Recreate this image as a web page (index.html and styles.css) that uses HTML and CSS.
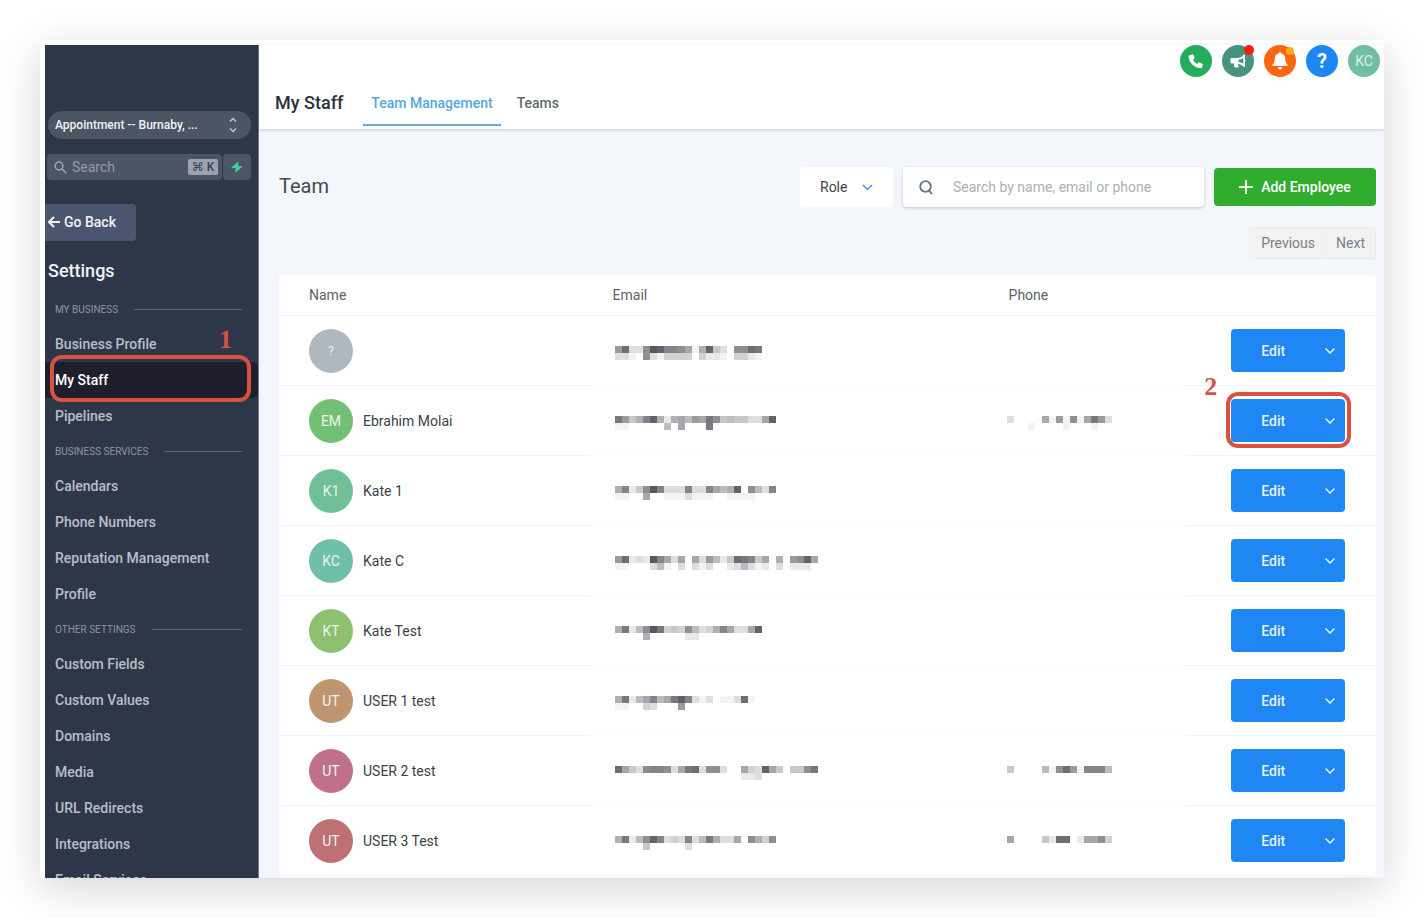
FILE: index.html
```html
<!DOCTYPE html>
<html lang="en">
<head>
<meta charset="utf-8">
<title>My Staff</title>
<link rel="stylesheet" href="styles.css">
</head>
<body>
<div class="frame">
  <aside class="sidebar">
    <button class="location" type="button">
      <span>Appointment -- Burnaby, ...</span>
      <svg width="8" height="16" viewBox="0 0 8 16"><path d="M1 4.5 4 1.5l3 3M1 11.500l3 3 3-3"/></svg>
    </button>
    <div class="quick">
      <label class="quick-search">
        <svg width="13" height="13" viewBox="0 0 13 13"><circle cx="5" cy="5" r="3.900"/><path d="m8 8 4.300 4.300"/></svg>
        <input type="text" placeholder="Search" aria-label="Search">
        <kbd>⌘ K</kbd>
      </label>
      <button class="bolt" type="button" aria-label="Quick actions">
        <svg width="12" height="12" viewBox="0 0 12 12"><path d="M7.300.2.600 6.200q-.4.800.5.900h3.500L4 11.800l7.300-6q.4-.8-.5-.9H7.400z"/></svg>
      </button>
    </div>
    <button class="back" type="button">
      <svg width="12" height="12" viewBox="0 0 12 12"><path d="M6 1 1 6l5 5M1.200 6H12"/></svg>
      Go Back
    </button>
    <h2>Settings</h2>
    <nav>
      <h3>MY BUSINESS</h3>
      <a href="#">Business Profile</a>
      <a href="#" class="active">My Staff<span class="ring ring-nav"></span><b class="step step-nav">1</b></a>
      <a href="#">Pipelines</a>
      <h3>BUSINESS SERVICES</h3>
      <a href="#">Calendars</a>
      <a href="#">Phone Numbers</a>
      <a href="#">Reputation Management</a>
      <a href="#">Profile</a>
      <h3>OTHER SETTINGS</h3>
      <a href="#">Custom Fields</a>
      <a href="#">Custom Values</a>
      <a href="#">Domains</a>
      <a href="#">Media</a>
      <a href="#">URL Redirects</a>
      <a href="#">Integrations</a>
      <a href="#">Email Services</a>
    </nav>
  </aside>
  <div class="content">
    <header class="topbar">
      <div class="actions">
        <button class="round phone" type="button" aria-label="Phone"><svg width="16" height="16" viewBox="0 0 16 16"><path d="M1.200 2.600 4.300 1.200q.6-.2.900.4l1.300 3q.2.500-.2.900L4.900 6.700q1.400 2.900 4.300 4.300l1.200-1.400q.4-.4.900-.2l3.100 1.300q.6.300.4.900l-.800 3q-.2.600-.8.600Q8 15.200 4.400 11.600T.7 3.400q0-.6.500-.8z"/></svg></button>
        <button class="round news" type="button" aria-label="Announcements"><svg width="17" height="16" viewBox="0 0 17 16"><path fill-rule="evenodd" d="M1.500 5H7q4 0 6.500-3.200Q15 1 15 2.500v4q1.500 1 0 2.500v4q0 1.500-1.500.800Q11.500 11 8 10.700q-.3 1.500.8 2.500 0 1.300-1.300 1.300H4.700Q3.600 12.800 4 10.500H1.500Q.5 10.500.5 9.500V6q0-1 1-1zM8.500 6.700v2.200q2.700.2 4.700 1.800V4.900q-2 1.600-4.700 1.800z"/></svg><i></i></button>
        <button class="round bell" type="button" aria-label="Notifications"><svg width="18" height="20" viewBox="0 0 18 20"><path d="M9 1q1 0 1 1.200 4 .9 4.200 5.300.1 4.500 2.300 6.100.6 1.200-.5 1.400H2q-1.100-.2-.5-1.400 2.200-1.600 2.300-6.100Q4 3.100 8 2.200 8 1 9 1zM6.700 16.300h4.600Q11 18.500 9 18.500t-2.300-2.200z"/></svg><i></i></button>
        <button class="round help" type="button" aria-label="Help">?</button>
        <button class="round me" type="button">KC</button>
      </div>
      <div class="tabs">
        <h1>My Staff</h1>
        <a href="#" class="current">Team Management</a>
        <a href="#">Teams</a>
      </div>
    </header>
    <main>
      <div class="tools">
        <h2>Team</h2>
        <div class="role">
          <select aria-label="Role"><option>Role</option></select>
          <svg width="11" height="7" viewBox="0 0 11 7"><path d="m1 1 4.500 4.500L10 1"/></svg>
        </div>
        <label class="search">
          <svg width="14" height="15" viewBox="0 0 14 15"><circle cx="6.500" cy="6.500" r="5.300"/><path d="m10 10.500 3 3.500"/></svg>
          <input type="text" placeholder="Search by name, email or phone" aria-label="Search by name, email or phone">
        </label>
        <button class="add" type="button"><svg width="14" height="14" viewBox="0 0 14 14"><path d="M7 0v14M0 7h14"/></svg>Add Employee</button>
      </div>
      <div class="pager"><button type="button">Previous</button><button type="button">Next</button></div>
      <table>
        <thead><tr><th class="c-name">Name</th><th class="c-email">Email</th><th class="c-phone">Phone</th><th class="c-edit"></th></tr></thead>
        <tbody id="staff"></tbody>
      </table>
    </main>
  </div>
</div>
<script src="staff.js"></script>
</body>
</html>
```
FILE: styles.css
```css
* { box-sizing: border-box; }
body {
  margin: 0;
  padding: 40px;
  background: #fff;
  font-family: Roboto, "Liberation Sans", sans-serif;
  font-size: 14px;
  color: #3c4248;
}
h1, h2, h3 { margin: 0; font-weight: 500; }
button, input, select { font: inherit; color: inherit; border: 0; margin: 0; padding: 0; background: none; outline: 0; }
a { color: inherit; text-decoration: none; }
svg { flex: none; fill: none; stroke: currentColor; }
.frame {
  display: flex;
  height: calc(100vh - 80px);
  overflow: hidden;
  padding: 5px 0 0 5px;
  background: #fff;
  box-shadow: 0 10px 40px rgba(0, 0, 0, .17);
}

/* Sidebar */
.sidebar {
  flex: none;
  width: 214px;
  padding-top: 66px;
  background: #2d3748;
  border-right: 1px solid #6f7888;
  color: #f1f3f6;
}
.location {
  display: flex;
  align-items: center;
  justify-content: space-between;
  width: 203px;
  height: 28px;
  margin-left: 3px;
  padding: 0 14px 1px 7px;
  border-radius: 14px;
  background: #4b5563;
  font-size: 12px;
  font-weight: 500;
}
.location svg { color: #bcc3cd; stroke-width: 1.5; }
.quick { display: flex; gap: 1px; margin: 15px 0 0 2px; width: 204px; height: 26px; }
.quick-search {
  display: flex;
  align-items: center;
  flex: 1;
  min-width: 0;
  padding: 0 4px 0 7px;
  border-radius: 4px;
  background: #4b5563;
  color: #a0a8b4;
}
.quick-search svg { stroke-width: 1.5; }
.quick-search input { flex: 1; min-width: 0; margin-left: 5px; }
.quick-search input::placeholder { color: #939ba7; opacity: 1; }
kbd {
  width: 30px;
  border-radius: 2px;
  background: #9ca3af;
  color: #374151;
  font: 500 12px/16px Roboto, "DejaVu Sans", sans-serif;
  text-align: center;
  white-space: nowrap;
}
.bolt { width: 28px; border-radius: 4px; background: #4b5563; color: #3ecf9b; line-height: 0; }
.bolt svg { fill: currentColor; stroke: none; }
.back {
  display: flex;
  align-items: center;
  gap: 4px;
  height: 37px;
  width: 91px;
  margin-top: 24px;
  padding: 0 0 1px 3px;
  border-radius: 0 4px 4px 0;
  background: #4a5670;
  font-weight: 500;
}
.back svg { stroke-width: 2; }
.sidebar h2 { margin: 18px 0 0 3px; font-size: 18px; line-height: 24px; }
nav { padding-top: 9px; }
nav h3 {
  display: flex;
  align-items: center;
  gap: 16px;
  height: 34px;
  padding: 0 16px 0 10px;
  font-size: 10px;
  font-weight: 400;
  color: #8d95a2;
}
nav h3::after { content: ""; flex: 1; height: 1px; background: #5b6575; }
nav a {
  position: relative;
  display: block;
  height: 36px;
  padding-left: 10px;
  line-height: 36px;
  font-weight: 500;
  color: #b9bec8;
}
nav a.active { background: #1e1e2d; border-radius: 0 6px 6px 0; color: #fff; }

/* Annotations */
.ring { position: absolute; border: 4px solid #d95140; border-radius: 12px; pointer-events: none; }
.ring-nav { inset: -7px 7px -4px 5px; }
.ring-edit { inset: -7px -6px -6px -5px; }
.step { position: absolute; font: bold 26px/26px "Liberation Serif", serif; color: #d95140; }
.step-nav { right: 26px; top: -35px; }
.step-edit { left: -27px; top: -25px; }

/* Header */
.content { flex: 1; min-width: 0; background: #f3f6fa; }
.topbar {
  position: relative;
  height: 84px;
  background: #fff;
  box-shadow: 0 1px 3px rgba(30, 50, 80, .22);
}
.actions { display: flex; justify-content: flex-end; gap: 10px; padding-right: 4px; }
.round {
  position: relative;
  display: grid;
  place-items: center;
  width: 32px;
  height: 32px;
  border-radius: 50%;
  color: #fff;
}
.round svg { fill: currentColor; stroke: none; }
.round i { position: absolute; top: 0; right: 0; width: 10px; height: 10px; border-radius: 50%; }
.phone { background: #24ad5d; }
.news { background: #469480; }
.news i { background: #fb1d0d; }
.bell { background: #fc6514; }
.bell i { right: 2px; width: 8px; height: 8px; top: 2px; background: #fba916; }
.help { background: #1d86f5; font-size: 20px; font-weight: 700; }
.me { background: #72bda5; color: #d9f0e8; }
.tabs { display: flex; height: 49px; padding-left: 16px; }
.tabs h1 { margin-right: 20px; font-size: 18px; line-height: 51px; color: #2b323c; }
.tabs a { height: 49px; padding: 0 8px; margin-right: 8px; line-height: 53px; font-weight: 500; color: #626971; }
.tabs .current { border-bottom: 2px solid #69a9db; color: #57a6dd; }

/* Team page */
main { padding: 38px 8px 0 20px; }
.tools { display: flex; align-items: center; gap: 10px; height: 40px; }
.tools h2 { flex: 1; padding-bottom: 2px; font-size: 20px; font-weight: 400; color: #464b50; }
.role { display: flex; align-items: center; width: 93px; height: 40px; border-radius: 4px; background: #fff; position: relative; }
.role select { width: 100%; height: 100%; padding-left: 20px; appearance: none; border-radius: 4px; }
.role svg { position: absolute; right: 20px; color: #3c96ed; stroke-width: 1.5; pointer-events: none; }
.search {
  display: flex;
  align-items: center;
  width: 301px;
  height: 40px;
  padding: 0 16px;
  border-radius: 4px;
  background: #fff;
  box-shadow: 0 1px 3px rgba(30, 40, 60, .24);
}
.search svg { color: #667485; stroke-width: 1.8; }
.search input { flex: 1; min-width: 0; margin-left: 20px; }
.search input::placeholder { color: #abb0b5; opacity: 1; }
.add {
  display: flex;
  align-items: center;
  justify-content: center;
  gap: 8px;
  width: 162px;
  height: 38px;
  border-radius: 4px;
  background: #30ad2d;
  color: #fff;
  font-weight: 500;
}
.add svg { stroke-width: 1.8; }
.pager { display: flex; justify-content: flex-end; margin: 20px 0 16px; }
.pager button {
  height: 32px;
  padding: 0 10px;
  border: 1px solid #e9ebee;
  border-radius: 0 4px 4px 0;
  background: #f2f2f3;
  color: #7b8086;
}
.pager button:first-child { border-right: 0; border-radius: 4px 0 0 4px; padding-left: 11px; }
table {
  width: 100%;
  table-layout: fixed;
  border-collapse: separate;
  border-spacing: 0;
  border-radius: 4px;
  background: #fff;
}
th { height: 41px; padding: 0; border-bottom: 1px solid #f0f3f8; font-weight: 400; text-align: left; color: #5c6268; }
td { height: 70px; padding: 0; border-bottom: 1px solid #fcfcfe; }
td.c-name, td.c-edit { border-color: #eff2f8; }
tr:last-child td { height: 69px; border: 0; }
.c-name { width: 28.4%; padding-left: 30px; }
.c-email { width: 36.1%; padding-left: 22px; }
.c-phone { width: 18.2%; padding-left: 22px; }
td.c-email { padding-left: 24px; }
td.c-phone { padding-left: 20px; }
.c-edit { padding-left: 45px; }
.person { display: flex; align-items: center; gap: 10px; }
.avatar { display: grid; place-items: center; width: 44px; height: 44px; border-radius: 50%; color: #e9f4ec; }
.avatar.unknown { font-size: 12px; }
.mosaic { display: block; margin-top: 4px; stroke: none; fill: #55585e; shape-rendering: crispEdges; }
.split { position: relative; display: flex; width: 114px; height: 43px; border-radius: 4px; background: #1f87f4; color: #e6f2ff; }
.split button:first-child { flex: 1; font-weight: 500; }
.split button:nth-child(2) { width: 30px; line-height: 0; }
.split svg { stroke-width: 1.5; }
```
FILE: staff.js
```js
// Hidden contact details are drawn as two rows of blocks; each hex digit is a block's darkness.
const staff = [
  { tag: '?', name: '', color: '#afb7c0', email: ['9d33afebba817e530aadc', '3310a3144440422104421'] },
  { tag: 'EM', name: 'Ebrahim Molai', color: '#72bf76', email: ['c957be7278698ca5655338e', '1100000608000c'], phone: ['300008191a18c93', '0001000010001'] },
  { tag: 'K1', name: 'Kate 1', color: '#70bf98', email: ['7b25afb333b33b867e0a63b', '11008001113111001111'] },
  { tag: 'KC', name: 'Kate C', color: '#70bfa9', email: ['9d232fb8380839625dcb580709ae8', '1100036103031300236312030222'] },
  { tag: 'KT', name: 'Kate Test', color: '#8fbf70', email: ['7c26afc454a6347b8338e', '000070000022'] },
  { tag: 'UT', name: 'USER 1 test', color: '#bf9570', email: ['7c268b68ceb3130113d1', '1100430009'] },
  { tag: 'UT', name: 'USER 2 test', color: '#bf708c', email: ['d853abba38cd3aa300843e85055ac', '000000000000000000223'], phone: ['5000061ad91bbb6', ''] },
  { tag: 'UT', name: 'USER 3 Test', color: '#bf7074', email: ['7c26aeb343b36c7338c0a74a'.slice(0, 18) + '0a74a', '00005000003'], phone: ['8000052dd0288a4', ''] }
];

function mosaic(rows) {
  if (!rows) return '';
  const blocks = rows.map((row, y) => [...row].map((c, x) =>
    c === '0' ? '' : `<rect x="${x * 7}" y="${y * 7}" width="7" height="7" opacity="${(parseInt(c, 16) / 15).toFixed(2)}"/>`
  ).join('')).join('');
  return `<svg class="mosaic" width="${rows[0].length * 7}" height="14">${blocks}</svg>`;
}

document.getElementById('staff').innerHTML = staff.map((s, i) => `
  <tr>
    <td class="c-name"><div class="person"><span class="avatar${s.name ? '' : ' unknown'}" style="background:${s.color}">${s.tag}</span>${s.name}</div></td>
    <td class="c-email">${mosaic(s.email)}</td>
    <td class="c-phone">${mosaic(s.phone)}</td>
    <td class="c-edit"><div class="split"><button type="button">Edit</button><button type="button" aria-label="More"><svg width="10" height="6" viewBox="0 0 10 6"><path d="m.5.500 4.500 4.500L9.500.500"/></svg></button>${i === 1 ? '<span class="ring ring-edit"></span><b class="step step-edit">2</b>' : ''}</div></td>
  </tr>`).join('');
```
